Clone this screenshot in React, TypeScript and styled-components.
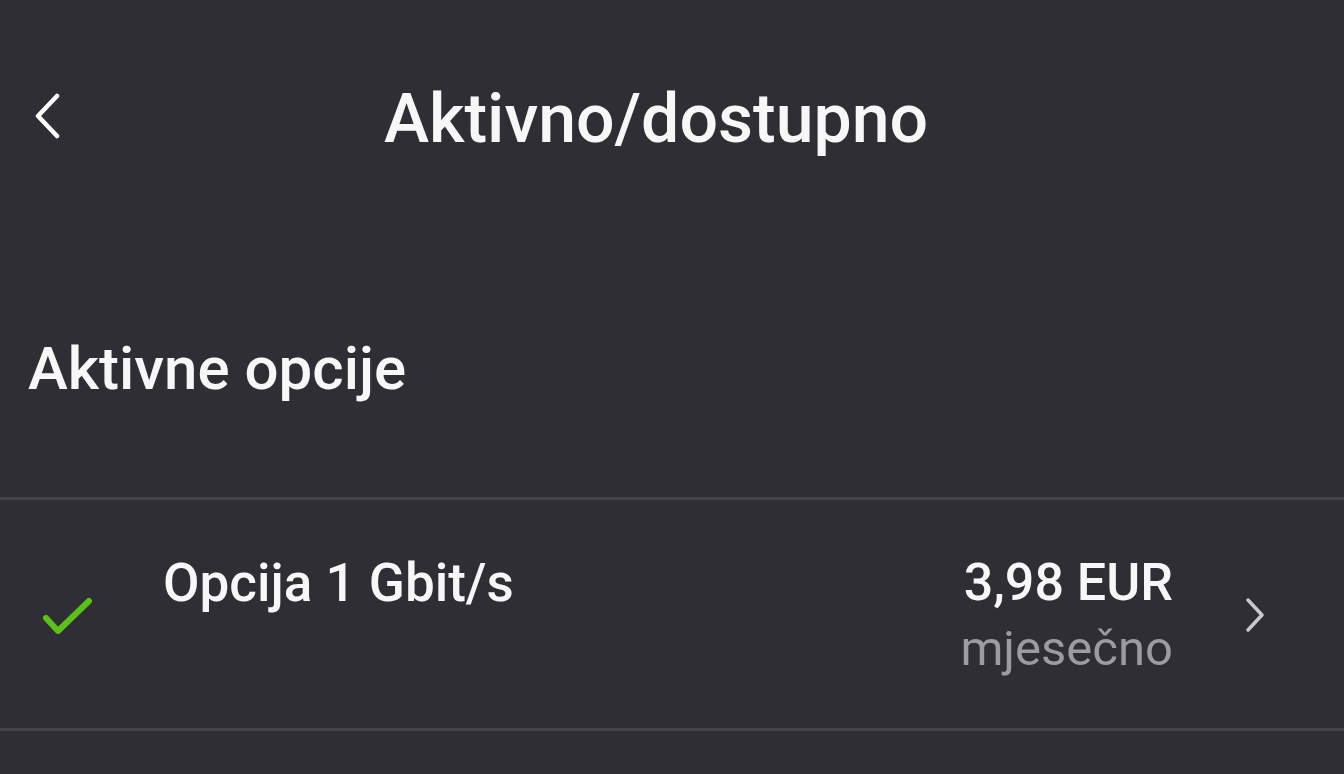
import styled, { createGlobalStyle } from "styled-components";

const Global = createGlobalStyle`
  html, body {
    margin: 0;
    padding: 0;
    background: #2f2e34;
  }
  body {
    font-family: Roboto, "Liberation Sans", sans-serif;
    color: #f5f5f5;
  }
`;

const Page = styled.div`
  width: 1344px;
  height: 774px;
  overflow: hidden;
  background: #2f2e34;
`;

const Header = styled.header`
  display: grid;
  grid-template-columns: 96px 1fr 128px;
  align-items: center;
  height: 240px;
`;

const BackButton = styled.button`
  display: flex;
  align-items: center;
  justify-content: flex-start;
  padding: 0 0 8px 34px;
  background: none;
  border: none;
  height: 60px;
  cursor: pointer;
`;

const Title = styled.h1`
  margin: 0;
  text-align: center;
  font-size: 68px;
  font-weight: 500;
  color: #f7f7f7;
  padding-bottom: 2px;
`;

const SectionTitle = styled.h2`
  margin: 0;
  height: 257px;
  display: flex;
  align-items: center;
  padding-left: 28px;
  font-size: 60px;
  font-weight: 500;
  color: #f7f7f7;
`;

const Row = styled.div`
  display: flex;
  align-items: center;
  height: 228px;
  border-top: 3px solid #45444a;
  border-bottom: 3px solid #45444a;
`;

const CheckCell = styled.div`
  width: 163px;
  display: flex;
  padding-left: 42px;
  box-sizing: border-box;
  padding-top: 6px;
`;

const OptionName = styled.div`
  flex: 1;
  align-self: flex-start;
  padding-top: 52px;
  font-size: 53px;
  font-weight: 500;
  color: #f7f7f7;
`;

const Price = styled.div`
  display: flex;
  flex-direction: column;
  align-items: flex-end;
  align-self: flex-start;
  padding-top: 52px;
`;

const Amount = styled.span`
  font-size: 52px;
  font-weight: 500;
  color: #f7f7f7;
  line-height: 62px;
`;

const Period = styled.span`
  font-size: 49px;
  font-weight: 400;
  color: #9c9ba1;
  line-height: 70px;
`;

const ChevronCell = styled.div`
  width: 171px;
  display: flex;
  padding-left: 72px;
  box-sizing: border-box;
  padding-top: 2px;
`;

export default function App() {
  return (
    <Page>
      <Global />
      <Header>
        <BackButton aria-label="Natrag">
          <svg width="26" height="46" viewBox="0 0 26 46" fill="none">
            <path d="M23 3 L4 23 L23 43" stroke="#ffffff" strokeWidth="4.5" strokeLinecap="round" strokeLinejoin="round" />
          </svg>
        </BackButton>
        <Title>Aktivno/dostupno</Title>
        <div />
      </Header>
      <SectionTitle>Aktivne opcije</SectionTitle>
      <Row>
        <CheckCell>
          <svg width="52" height="42" viewBox="0 0 52 42" fill="none">
            <path d="M4 22 L16 35 L47 5" stroke="#5ebf1c" strokeWidth="6" strokeLinecap="round" strokeLinejoin="round" />
          </svg>
        </CheckCell>
        <OptionName>Opcija 1 Gbit/s</OptionName>
        <Price>
          <Amount>3,98 EUR</Amount>
          <Period>mjesečno</Period>
        </Price>
        <ChevronCell>
          <svg width="20" height="36" viewBox="0 0 20 36" fill="none">
            <path d="M3 3 L17 18 L3 33" stroke="#c9c8cd" strokeWidth="3.5" strokeLinecap="round" strokeLinejoin="round" />
          </svg>
        </ChevronCell>
      </Row>
    </Page>
  );
}
